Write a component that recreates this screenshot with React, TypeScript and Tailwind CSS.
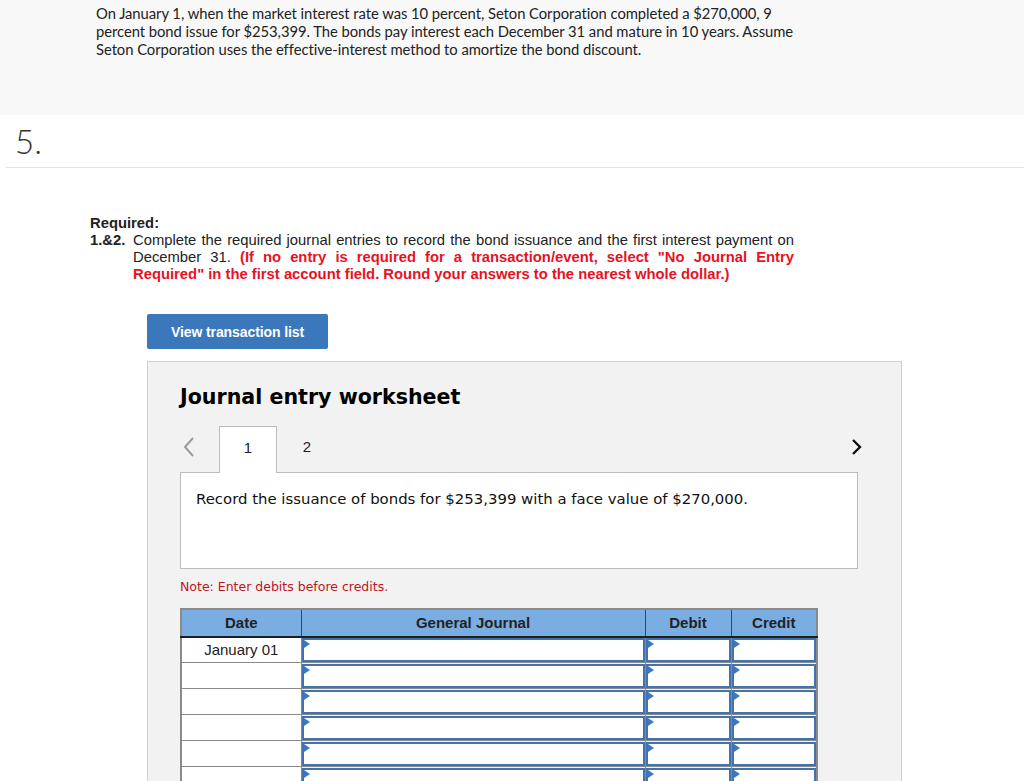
const rows = ["January 01", "", "", "", "", ""];

function Arrow() {
  return (
    <span className="absolute left-0 top-0 h-0 w-0 border-y-[4px] border-l-[6px] border-y-transparent border-l-[#3b78c4]" />
  );
}

function InputCell() {
  return (
    <td className="h-[26px] border border-[#8a8a8a] p-0">
      <div className="relative h-[24px] border-2 border-[#4472ad] bg-white">
        <Arrow />
      </div>
    </td>
  );
}

function Chevron({ dir, color }: { dir: "left" | "right"; color: string }) {
  return (
    <svg width="14" height="22" viewBox="0 0 14 22" fill="none">
      <path
        d={dir === "left" ? "M11 2 L3 11 L11 20" : "M3 4 L10 11 L3 18"}
        stroke={color}
        strokeWidth={dir === "left" ? 2 : 2.4}
      />
    </svg>
  );
}

export default function App() {
  return (
    <div className="min-h-[781px] w-[1024px] overflow-hidden bg-white text-[#222]">
      <div className="h-[115px] bg-[#f8f8f8] pl-[96px] pt-[4px]">
        <p className="whitespace-nowrap font-['Lato',sans-serif] text-[14.8px] leading-[18px] tracking-[-0.05px] text-[#222]">
          On January 1, when the market interest rate was 10 percent, Seton Corporation completed a $270,000, 9
          <br />
          percent bond issue for $253,399. The bonds pay interest each December 31 and mature in 10 years. Assume
          <br />
          Seton Corporation uses the effective-interest method to amortize the bond discount.
        </p>
      </div>

      <div className="ml-[6px] flex h-[53px] items-center border-b border-[#e3e3e3] pl-[9px]">
        <span className="font-['Lato',sans-serif] text-[33px] font-light leading-none text-[#333]">5.</span>
      </div>

      <div className="pl-[90px] pt-[47px] font-['Liberation_Sans',Arial,sans-serif] text-[14.8px] leading-[17px]">
        <div className="font-bold">Required:</div>
        <div className="flex w-[704px]">
          <span className="w-[43px] shrink-0 font-bold">1.&amp;2.</span>
          <div className="w-[661px]">
            <div className="whitespace-nowrap text-justify [text-align-last:justify]">
              Complete the required journal entries to record the bond issuance and the first interest payment on
            </div>
            <div className="whitespace-nowrap text-justify [text-align-last:justify]">
              December 31.{" "}
              <span className="font-bold text-[#e8121f]">
                (If no entry is required for a transaction/event, select "No Journal Entry
              </span>
            </div>
            <div className="whitespace-nowrap font-bold text-[#e8121f]">
              Required" in the first account field. Round your answers to the nearest whole dollar.)
            </div>
          </div>
        </div>
      </div>

      <div className="pl-[147px] pt-[31px]">
        <button className="h-[35px] w-[181px] rounded-[2px] bg-[#3b77bb] pt-[1px] font-['Liberation_Sans',Arial,sans-serif] text-[14px] font-bold tracking-[-0.1px] text-white">
          View transaction list
        </button>

        <div className="mt-[12px] h-[440px] w-[755px] border border-[#cfcfcf] bg-[#f2f2f2] pl-[32px] pr-[43px] pt-[22px]">
          <h2 className="font-['DejaVu_Sans',Verdana,sans-serif] text-[20.6px] font-bold leading-[26px] text-black">
            Journal entry worksheet
          </h2>

          <div className="mt-[16px] flex h-[46px] items-stretch">
            <span className="flex w-[39px] items-center pl-[2px] pb-[4px]">
              <Chevron dir="left" color="#9a9a9a" />
            </span>
            <div className="relative z-10 -mb-px flex w-[58px] items-center justify-center border border-b-0 border-[#bbb] bg-white pb-[4px] font-['Liberation_Sans',Arial,sans-serif] text-[15px]">
              1
            </div>
            <div className="flex w-[60px] items-center justify-center pb-[4px] font-['Liberation_Sans',Arial,sans-serif] text-[15px]">
              2
            </div>
            <span className="-mr-[6px] ml-auto flex items-center pb-[4px]">
              <Chevron dir="right" color="#111" />
            </span>
          </div>

          <div className="h-[97px] border border-[#bbb] bg-white px-[15px] pt-[15px] font-['DejaVu_Sans',Verdana,sans-serif] text-[14.9px] text-[#111]">
            Record the issuance of bonds for $253,399 with a face value of $270,000.
          </div>

          <div className="mt-[9px] font-['DejaVu_Sans',Verdana,sans-serif] text-[12.5px] text-[#c0141c]">
            Note: Enter debits before credits.
          </div>

          <table className="mt-[11px] w-[634px] table-fixed border-collapse border-2 border-[#8a8a8a] font-['Liberation_Sans',Arial,sans-serif] text-[15px]">
            <thead>
              <tr className="h-[28px] bg-[#7aaee2] font-bold text-[#222]">
                <th className="w-[120px] border border-[#444] border-b-2 border-b-[#1e1e1e] font-bold">Date</th>
                <th className="w-[344px] border border-[#444] border-b-2 border-b-[#1e1e1e] font-bold">General Journal</th>
                <th className="w-[86px] border border-[#444] border-b-2 border-b-[#1e1e1e] font-bold">Debit</th>
                <th className="w-[86px] border border-[#444] border-b-2 border-b-[#1e1e1e] font-bold">Credit</th>
              </tr>
            </thead>
            <tbody>
              {rows.map((d, i) => (
                <tr key={i} className="h-[26px]">
                  <td className="border border-[#8a8a8a] bg-white text-center text-[#222]">{d}</td>
                  <InputCell />
                  <InputCell />
                  <InputCell />
                </tr>
              ))}
            </tbody>
          </table>
        </div>
      </div>
    </div>
  );
}
